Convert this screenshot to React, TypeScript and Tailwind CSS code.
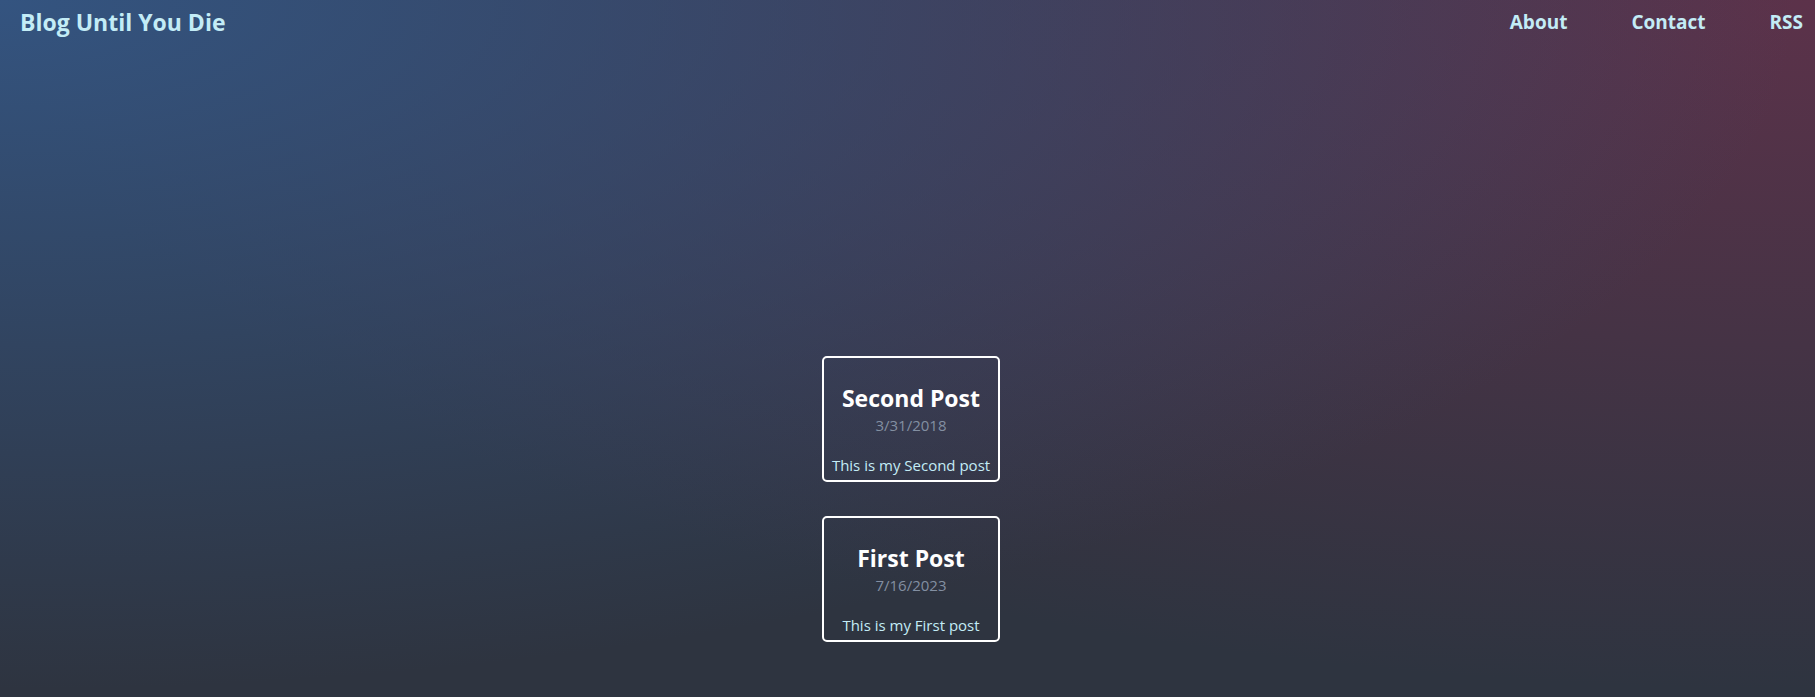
import React from "react";

const posts = [
  { title: "Second Post", date: "3/31/2018", desc: "This is my Second post" },
  { title: "First Post", date: "7/16/2023", desc: "This is my First post" },
];

export default function App() {
  return (
    <div className="min-h-[697px] w-full bg-[#2e3440] bg-[radial-gradient(ellipse_at_0%_0%,rgba(52,84,128,1)_0%,rgba(52,84,128,0)_70%),radial-gradient(ellipse_at_100%_0%,rgba(92,50,74,1)_0%,rgba(92,50,74,0)_70%)] font-['Open_Sans',sans-serif]">
      <header className="flex items-center justify-between h-[44px] pl-[20px] pr-[12px]">
        <div className="text-[23px] font-bold text-[#c3ecf6]">Blog Until You Die</div>
        <nav className="flex items-center gap-[64px] text-[19px] font-bold text-[#c3ecf6]">
          <span>About</span>
          <span>Contact</span>
          <span>RSS</span>
        </nav>
      </header>
      <main className="flex flex-col items-center gap-[34px] pt-[312px] pl-[7px]">
        {posts.map((p) => (
          <div
            key={p.title}
            className="w-[178px] h-[126px] border-2 border-white rounded-[5px] flex flex-col items-center pt-[27px] pb-[6px]"
          >
            <div className="text-[23px] font-bold text-white leading-[27px]">{p.title}</div>
            <div className="text-[15px] text-[#838fa2] leading-[20px] mt-[3px]">{p.date}</div>
            <div className="mt-auto text-[15px] text-[#c3ecf6] leading-[18px]">{p.desc}</div>
          </div>
        ))}
      </main>
    </div>
  );
}
